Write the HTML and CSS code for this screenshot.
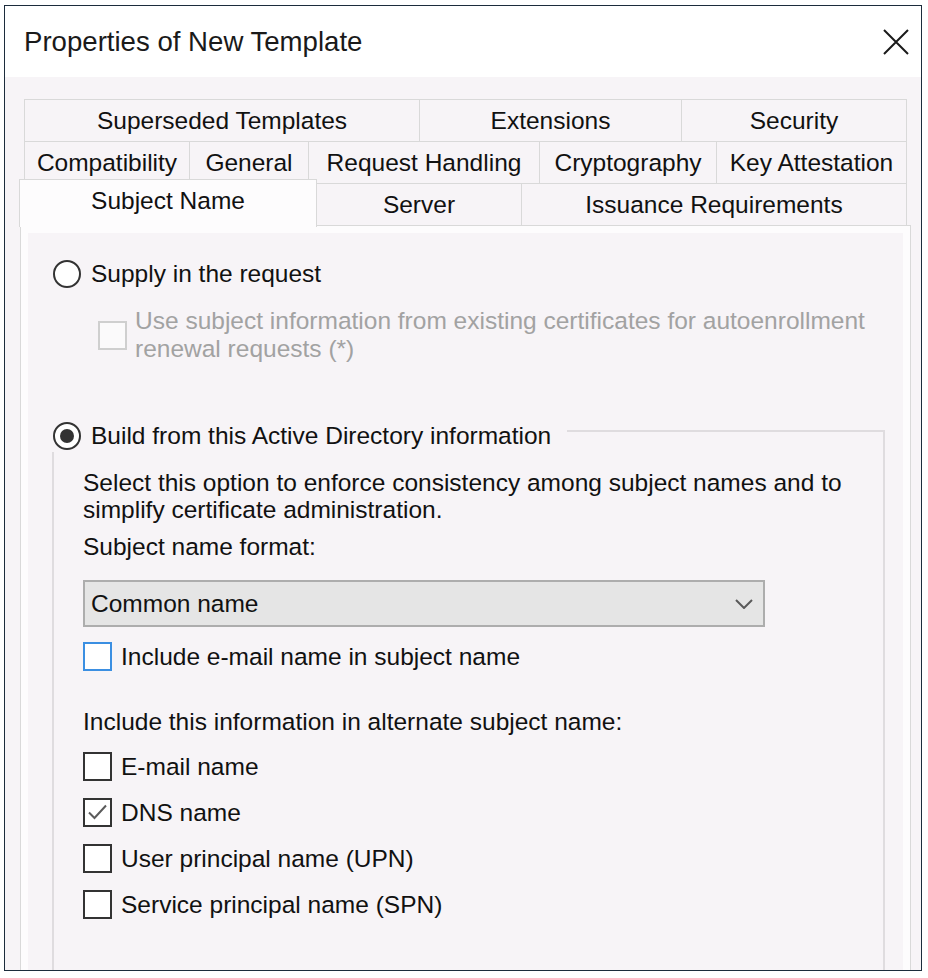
FILE: index.html
```html
<!DOCTYPE html>
<html lang="en">
<head>
  <meta charset="UTF-8">
  <title>Properties of New Template</title>
  <link rel="stylesheet" href="styles.css">
</head>
<body>

  <div class="window">
    <div class="titlebar">
      <span class="title">Properties of New Template</span>
      <svg class="close" width="26" height="26" viewBox="0 0 26 26">
        <path d="M1 1L25 25M25 1L1 25" stroke="#1a1a1a" stroke-width="2" fill="none"/>
      </svg>
    </div>

    <div class="dialog">
      <div class="tabs">
        <div class="tab-row">
          <div class="tab t-superseded">Superseded Templates</div>
          <div class="tab t-extensions">Extensions</div>
          <div class="tab t-security">Security</div>
        </div>
        <div class="tab-row">
          <div class="tab t-compat">Compatibility</div>
          <div class="tab t-general">General</div>
          <div class="tab t-request">Request Handling</div>
          <div class="tab t-crypto">Cryptography</div>
          <div class="tab t-attest">Key Attestation</div>
        </div>
        <div class="tab-row">
          <div class="tab active t-subject">Subject Name</div>
          <div class="tab t-server">Server</div>
          <div class="tab t-issuance">Issuance Requirements</div>
        </div>
      </div>

      <div class="panel">
        <div class="page">

          <div class="option">
            <span class="radio"></span>
            <span class="label">Supply in the request</span>
          </div>

          <div class="sub-option">
            <span class="box disabled"></span>
            <span class="label wrap">Use subject information from existing certificates for autoenrollment renewal requests (*)</span>
          </div>

          <div class="group">
            <div class="group-head">
              <span class="radio on"></span>
              <span class="label">Build from this Active Directory information</span>
            </div>

            <p class="desc">Select this option to enforce consistency among subject names and to simplify certificate administration.</p>

            <div class="field-label">Subject name format:</div>
            <div class="select">
              <span>Common name</span>
              <svg width="18" height="10" viewBox="0 0 18 10">
                <path d="M1 1L9 9L17 1" stroke="#5a5a5a" stroke-width="2" fill="none"/>
              </svg>
            </div>

            <div class="check email">
              <span class="box focus"></span>
              <span class="label">Include e-mail name in subject name</span>
            </div>

            <div class="field-label alt">Include this information in alternate subject name:</div>
            <div class="check-list">
              <div class="check">
                <span class="box"></span>
                <span class="label">E-mail name</span>
              </div>
              <div class="check">
                <span class="box">
                  <svg width="25" height="25" viewBox="0 0 25 25">
                    <path d="M4 12.5L9.5 18L21 5.5" stroke="#5b5b5b" stroke-width="2" fill="none"/>
                  </svg>
                </span>
                <span class="label">DNS name</span>
              </div>
              <div class="check">
                <span class="box"></span>
                <span class="label">User principal name (UPN)</span>
              </div>
              <div class="check">
                <span class="box"></span>
                <span class="label">Service principal name (SPN)</span>
              </div>
            </div>
          </div>

        </div>
      </div>
    </div>
  </div>

</body>
</html>
```

FILE: styles.css
```css
* { box-sizing: border-box; margin: 0; padding: 0; }

body {
  background: #fff;
  font-family: "Liberation Sans", Arial, sans-serif;
  font-size: 24.5px;
  color: #111;
}

.window {
  margin: 5px 0 0 4px;
  width: 918px;
  height: 966px;
  border: 1px solid #1c2c3c;
  background: #f7f4f7;
  overflow: hidden;
}

.titlebar {
  height: 71px;
  background: #fff;
  display: flex;
  align-items: center;
  justify-content: space-between;
  padding: 0 12px 0 19px;
}

.title {
  font-size: 27.6px;
  color: #1a1a1a;
}

.dialog {
  padding: 22px 10px 0 15px;
}

/* tabs */

.tabs {
  margin: 0 4px;
}

.tab-row {
  display: flex;
  align-items: flex-start;
  height: 42px;
}

.tab {
  height: 42px;
  border-top: 1px solid #d9d9d9;
  border-left: 1px solid #d9d9d9;
  display: flex;
  align-items: center;
  justify-content: center;
  white-space: nowrap;
  background: #f7f4f7;
}

.tab:last-child {
  border-right: 1px solid #d9d9d9;
}

.tab.active {
  position: relative;
  z-index: 1;
  margin-top: -4px;
  margin-left: -5px;
  height: 48px;
  padding-bottom: 6px;
  border-right: 1px solid #d9d9d9;
  background: #fdfcfd;
}

.tab.active + .tab {
  border-left: none;
}

.t-superseded { width: 395px; }
.t-extensions { width: 262px; }
.t-security { width: 226px; }
.t-compat { width: 165px; }
.t-general { width: 119px; }
.t-request { width: 231px; }
.t-crypto { width: 177px; }
.t-attest { width: 191px; }
.t-subject { width: 298px; }
.t-server { width: 204px; }
.t-issuance { width: 386px; }

/* page */

.panel {
  border: 1px solid #d9d9d9;
  background: #fdfcfd;
  padding: 7px;
}

.page {
  background: #f7f4f7;
  padding: 27px 0 0 25px;
}

.label {
  line-height: 28px;
  white-space: nowrap;
}

.option {
  display: flex;
  align-items: center;
  gap: 10px;
}

.radio {
  width: 28px;
  height: 28px;
  border: 2px solid #333;
  border-radius: 50%;
  background: #fff;
  display: flex;
  align-items: center;
  justify-content: center;
  flex-shrink: 0;
}

.radio.on::after {
  content: '';
  width: 14px;
  height: 14px;
  border-radius: 50%;
  background: #333;
}

.box {
  width: 29px;
  height: 29px;
  border: 2px solid #333;
  background: #fff;
  flex-shrink: 0;
  display: flex;
}

.box.disabled {
  border-color: #cfcfcf;
  background: #fbfafb;
}

.box.focus {
  border-color: #3b8fe2;
}

.sub-option {
  display: flex;
  align-items: center;
  gap: 8px;
  margin: 19px 0 0 45px;
  color: #a2a2a2;
}

.sub-option .wrap {
  white-space: normal;
  width: 745px;
}

/* group box */

.group {
  margin: 67px 0 0 -1px;
  width: 833px;
  border: 2px solid #dfdcdf;
  padding: 0 20px 200px 29px;
}

.group-head {
  display: flex;
  align-items: center;
  gap: 10px;
  width: max-content;
  height: 32px;
  margin: -12px 0 0 -33px;
  padding: 0 16px 0 3px;
  background: #f7f4f7;
}

.desc {
  margin-top: 17px;
  line-height: 27px;
  width: 775px;
}

.field-label {
  margin-top: 10px;
  line-height: 28px;
}

.field-label.alt {
  margin-top: 37px;
}

.select {
  margin-top: 19px;
  width: 682px;
  height: 47px;
  border: 2px solid #adadad;
  background: #e5e5e5;
  display: flex;
  align-items: center;
  justify-content: space-between;
  padding: 0 10px 0 6px;
}

.check {
  display: flex;
  align-items: center;
  gap: 9px;
}

.check.email {
  margin-top: 15px;
}

.check-list {
  margin-top: 16px;
  display: flex;
  flex-direction: column;
  gap: 17px;
}
```
